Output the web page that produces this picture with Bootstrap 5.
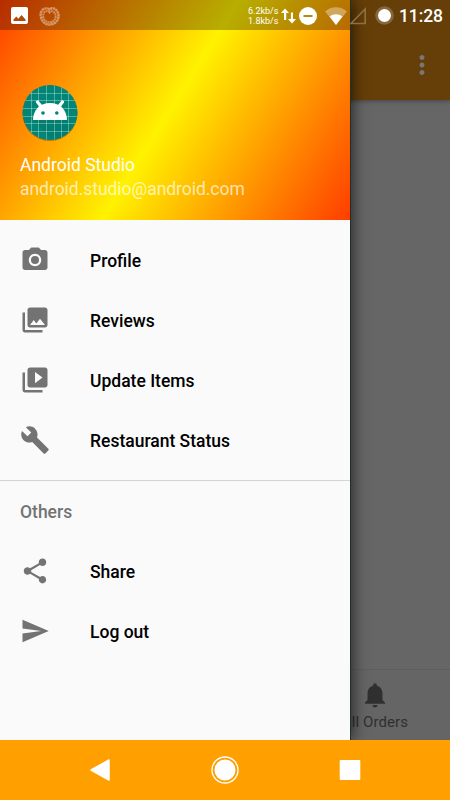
<!DOCTYPE html>
<html lang="en">
<head>
<meta charset="utf-8">
<meta name="viewport" content="width=device-width, initial-scale=1">
<title>Navigation drawer</title>
<link rel="stylesheet" href="https://cdn.jsdelivr.net/npm/bootstrap@5.3.0/dist/css/bootstrap.min.css">
<style>
  body { font-family: Roboto, sans-serif; font-size: 17.5px; line-height: 1.2; }
  svg { display: block; flex: none; }
  .phone { width: 450px; height: 800px; background: #ff9f00; }
  .screen { height: 740px; background: #666; }
  .status { height: 30px; z-index: 3; color: #fff; padding: 1px 7px 0 11px; }
  .status-shade { height: 30px; width: 350px; background: rgba(0,0,0,.28); }
  .rates { font-size: 9px; line-height: 10px; width: 31px; white-space: nowrap; }
  .clock { font-size: 17.5px; font-weight: 500; line-height: 28px; padding-top: 1px; width: 44px; margin-left: 5px; letter-spacing: -.1px; }
  .wifi { margin-left: 8px; }
  .signal { margin-left: 3px; }
  .battery { margin-left: 7px; }
  .app-bar { height: 100px; background: #663f08; padding: 30px 13px 0 0; box-shadow: 0 1px 5px rgba(0,0,0,.35); }
  .tabs-bar { height: 71px; background: #656565; border-top: 1px solid #5e5e5e; color: #303030; padding: 10px 40px 0 0; }
  .tab-item { width: 70px; font-size: 15px; line-height: 18px; letter-spacing: .1px; }
  .tab-item span { margin-top: 3px; }
  .drawer { width: 350px; height: 740px; background: #fafafa; box-shadow: 1px 0 0 #22302a, 3px 0 14px rgba(0,0,0,.6); z-index: 2; }
  .drawer-head { height: 220px; padding: 80px 20px 0; color: #fff; background: linear-gradient(122deg, #ff3d00, #fff200 49%, #ff3d00); }
  .avatar { margin-bottom: 10px; }
  .user { line-height: 21px; }
  .mail { line-height: 24px; color: rgba(255,255,255,.7); margin-top: 1px; letter-spacing: -.04px; }
  .menu-list { padding-top: 10px; }
  .menu-row { height: 60px; padding: 0 20px; gap: 40px; color: #000; font-weight: 500; }
  .menu-row span { padding-top: 2px; }
  .menu-row svg { width: 30px; height: 30px; fill: #737373; margin-bottom: 1px; }
  .rule { height: 1px; background: #d4d4d4; margin: 10px 0 0; }
  .group-title { height: 60px; padding: 3px 20px 0; font-weight: 500; color: #737373; }
  .sys-nav { height: 60px; padding: 0 85px; z-index: 3; background: #ff9f00; }
</style>
<script src="https://cdn.jsdelivr.net/npm/bootstrap@5.3.0/dist/js/bootstrap.bundle.min.js"></script>
</head>
<body class="m-0">
<div class="phone position-relative overflow-hidden d-flex flex-column">

  <main class="screen d-flex flex-column overflow-hidden">
    <header class="app-bar d-flex align-items-center justify-content-end">
      <svg width="30" height="30" viewBox="0 0 24 24" fill="#777"><path d="M12 8c1.100 0 2-.9 2-2s-.9-2-2-2-2 .9-2 2 .9 2 2 2zm0 2c-1.100 0-2 .9-2 2s.9 2 2 2 2-.9 2-2-.9-2-2-2zm0 6c-1.100 0-2 .9-2 2s.9 2 2 2 2-.9 2-2-.9-2-2-2z"/></svg>
    </header>
    <footer class="tabs-bar mt-auto d-flex justify-content-end">
      <div class="tab-item d-flex flex-column align-items-center">
        <svg width="30" height="30" viewBox="0 0 24 24" fill="#303030"><path d="M12 22c1.100 0 2-.9 2-2h-4c0 1.100.89 2 2 2zm6-6v-5c0-3.070-1.640-5.640-4.500-6.320V4c0-.83-.67-1.500-1.500-1.500s-1.500.67-1.500 1.500v.68C7.630 5.360 6 7.920 6 11v5l-2 2v1h16v-1l-2-2z"/></svg>
        <span class="text-nowrap">All Orders</span>
      </div>
    </footer>
  </main>

  <aside class="drawer position-absolute top-0 start-0">
    <div class="drawer-head">
      <svg class="avatar" width="60" height="65" viewBox="0 0 60 65">
        <defs><clipPath id="disc"><circle cx="30" cy="32.500" r="27.500"/></clipPath></defs>
        <circle cx="30" cy="33.600" r="27.500" fill="#7a5a00" opacity=".55"/>
        <circle cx="30" cy="32.500" r="27.500" fill="#008577"/>
        <g clip-path="url(#disc)">
          <path d="M13 40h34l14 14v16H43z" fill="#000" opacity=".05"/>
          <path d="M11.500 4v58M18.500 4v58M26.500 4v58M34.500 4v58M41.500 4v58M48.500 4v58M2 13.500h56M2 20.500h56M2 28.500h56M2 36.500h56M2 43.500h56M2 51.500h56" stroke="#fff" stroke-opacity=".32" stroke-width="1" fill="none"/>
        </g>
        <path d="M13 40c0-10 7-17 17-17s17 7 17 17z" fill="#fff"/>
        <path d="M17.500 22l5 6M42.500 22l-5 6" stroke="#fff" stroke-width="3.200" stroke-linecap="round"/>
        <circle cx="23" cy="33" r="1.800" fill="#008577"/><circle cx="36.800" cy="33" r="1.800" fill="#008577"/>
      </svg>
      <div class="user">Android Studio</div>
      <div class="mail">android.studio@android.com</div>
    </div>

    <nav class="d-flex flex-column">
      <div class="menu-list d-flex flex-column">
        <a class="menu-row d-flex align-items-center text-decoration-none"><svg viewBox="0 0 24 24"><circle cx="12" cy="12" r="3.200"/><path d="M9 2L7.170 4H4c-1.100 0-2 .9-2 2v12c0 1.100.9 2 2 2h16c1.100 0 2-.9 2-2V6c0-1.100-.9-2-2-2h-3.170L15 2H9zm3 15c-2.760 0-5-2.240-5-5s2.240-5 5-5 5 2.240 5 5-2.240 5-5 5z"/></svg><span>Profile</span></a>
        <a class="menu-row d-flex align-items-center text-decoration-none"><svg viewBox="0 0 24 24"><path d="M22 16V4c0-1.100-.9-2-2-2H8c-1.100 0-2 .9-2 2v12c0 1.100.9 2 2 2h12c1.100 0 2-.9 2-2zm-11-4l2.030 2.710L16 11l4 5H8l3-4zM2 6v14c0 1.100.9 2 2 2h14v-2H4V6H2z"/></svg><span>Reviews</span></a>
        <a class="menu-row d-flex align-items-center text-decoration-none"><svg viewBox="0 0 24 24"><path d="M4 6H2v14c0 1.100.9 2 2 2h14v-2H4V6zm16-4H8c-1.100 0-2 .9-2 2v12c0 1.100.9 2 2 2h12c1.100 0 2-.9 2-2V4c0-1.100-.9-2-2-2zm-8 12.500v-9l6 4.500-6 4.500z"/></svg><span>Update Items</span></a>
        <a class="menu-row d-flex align-items-center text-decoration-none"><svg viewBox="0 0 24 24"><path d="M22.700 19l-9.100-9.100c.9-2.300.4-5-1.500-6.900-2-2-5-2.400-7.400-1.300L9 6 6 9 1.600 4.700C.4 7.100.9 10.100 2.900 12.100c1.900 1.900 4.600 2.400 6.900 1.500l9.100 9.100c.4.4 1 .4 1.400 0l2.300-2.300c.5-.4.5-1.100.1-1.400z"/></svg><span>Restaurant Status</span></a>
      </div>
      <div class="rule"></div>
      <div class="group-title d-flex align-items-center">Others</div>
      <a class="menu-row d-flex align-items-center text-decoration-none"><svg viewBox="0 0 24 24"><path d="M18 16.080c-.76 0-1.440.3-1.960.77L8.910 12.700c.05-.23.09-.46.09-.7s-.04-.47-.09-.7l7.050-4.110c.54.5 1.250.81 2.040.81 1.660 0 3-1.340 3-3s-1.340-3-3-3-3 1.340-3 3c0 .24.04.47.09.7L8.040 9.810C7.500 9.310 6.790 9 6 9c-1.660 0-3 1.340-3 3s1.340 3 3 3c.79 0 1.500-.31 2.040-.81l7.120 4.160c-.05.21-.08.43-.08.65 0 1.610 1.310 2.920 2.920 2.920s2.920-1.310 2.920-2.920-1.310-2.920-2.920-2.920z"/></svg><span>Share</span></a>
      <a class="menu-row d-flex align-items-center text-decoration-none"><svg viewBox="0 0 24 24"><path d="M2.010 21L23 12 2.010 3 2 10l15 2-15 2z"/></svg><span>Log out</span></a>
    </nav>
    <div class="status-shade position-absolute top-0 start-0"></div>
  </aside>

  <div class="status position-absolute top-0 start-0 w-100 d-flex align-items-center">
    <svg width="17" height="17" viewBox="0 0 17 17"><rect width="17" height="17" rx="2" fill="#fff"/><path d="M2.500 14v-1.500l2.800-3 2 2.200L10.500 8l4 4.500V14z" fill="#b04a08"/></svg>
    <svg class="ms-2" width="28" height="22" viewBox="0 0 28 22" fill="none" stroke="#f0c8a8"><path d="M13.500 4.500C9 1 3 6 5 12c1 6 6 8 9 7.500 6-.5 9-5 8.500-9.500C22 5 17 1 13.500 4.500z" stroke-width="2.400" stroke-dasharray="2.500 .4" opacity=".6"/><path d="M13.500 7.500C11 4 6.500 7 7.300 12c1 4 4 5.500 6.700 5.200 4-.5 6.500-3.700 5.500-7.200C18.500 6 15.500 5 13.500 7.500z" stroke-width="2" stroke-dasharray="2 .5" opacity=".55"/></svg>
    <div class="rates ms-auto">6.2kb/s<br>1.8kb/s</div>
    <svg width="20" height="20" viewBox="0 0 20 20" fill="#fff"><path d="M6 2.500L2 7h3v7h2.200V7H10zM13 17.500L9 13h2.900V6.500H14V13h3z"/></svg>
    <svg width="18" height="18" viewBox="0 0 18 18"><circle cx="9" cy="9" r="9" fill="#fff"/><path d="M4.500 9h9" stroke="#b48c08" stroke-width="2"/></svg>
    <svg class="wifi" width="22" height="18" viewBox="0 0 22 18" fill="#fff"><path d="M0 4.500C6-1.200 16-1.200 22 4.500L11 18z" opacity=".35"/><path d="M4.600 9.500c4-3 8.800-3 12.800 0L11 18z"/></svg>
    <svg class="signal" width="18" height="18" viewBox="0 0 18 18" fill="none" stroke="#8e7041" stroke-width="1.600"><path d="M1 16.500L15.200 2v14.500z"/></svg>
    <svg class="battery" width="19" height="19" viewBox="0 0 19 19"><circle cx="9.500" cy="9.500" r="9.300" fill="#86683e"/><circle cx="9.500" cy="9.500" r="6.500" fill="#fff"/></svg>
    <div class="clock text-nowrap">11:28</div>
  </div>

  <footer class="sys-nav position-relative d-flex align-items-center justify-content-between">
    <svg width="30" height="30" viewBox="0 0 30 30"><path d="M6 15L24 5v20z" fill="#fff" stroke="#fff" stroke-width="1.500" stroke-linejoin="round"/></svg>
    <svg width="30" height="30" viewBox="0 0 30 30"><circle cx="15" cy="15" r="13" fill="none" stroke="#fff" stroke-width="1.400"/><circle cx="15" cy="15" r="10.500" fill="#fff"/></svg>
    <svg width="30" height="30" viewBox="0 0 30 30"><rect x="4.700" y="5" width="20.600" height="20" rx="1" fill="#fff"/></svg>
  </footer>
</div>
</body>
</html>
